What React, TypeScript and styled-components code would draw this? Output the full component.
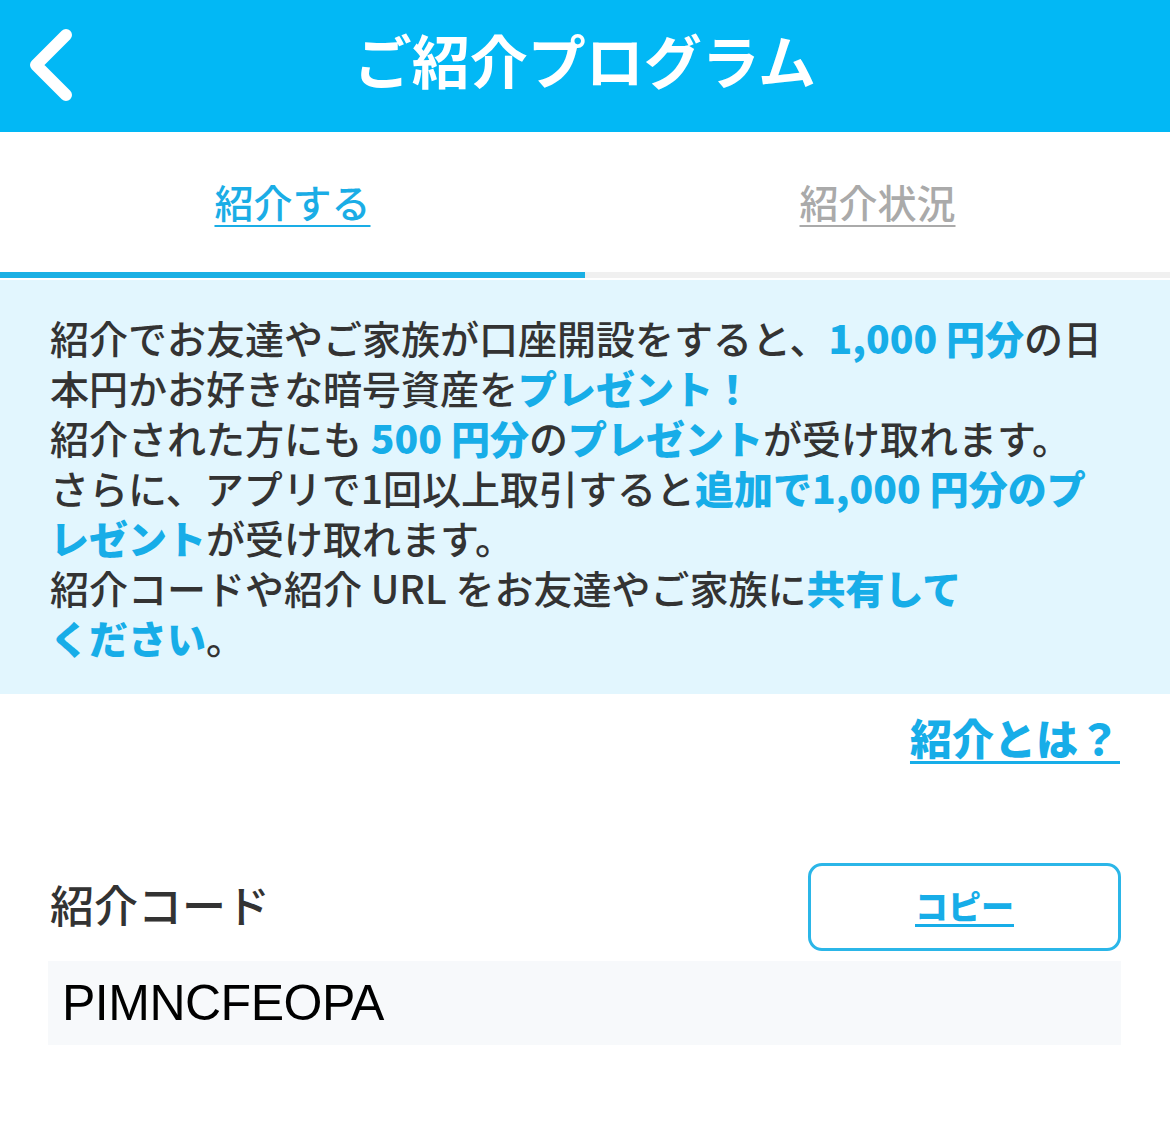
import React from 'react';
import styled, {createGlobalStyle} from "styled-components";

const GlobalStyle = createGlobalStyle`
  html, body {
    margin: 0;
    padding: 0;
    background: #ffffff;
  }
  body {
    font-family: "Noto Sans CJK JP", "Noto Sans", sans-serif;
    color: #333333;
  }
`;

const Page = styled.div`
  width: 1170px;
  min-height: 1131px;
  background: #ffffff;
`;

const Header = styled.header`
  height: 132px;
  background-color: #02b8f5;
  display: grid;
  grid-template-columns: 1fr auto 1fr;
  align-items: center;
`;

const BackButton = styled.button`
  justify-self: start;
  width: 100px;
  height: 100px;
  margin-left: 20px;
  margin-top: 8px;
  padding: 0;
  border: none;
  background: transparent;
  display: flex;
  align-items: center;
  cursor: pointer;
`;

const Title = styled.h1`
  margin: 0 0 14px;
  color: #ffffff;
  font-size: 58px;
  font-weight: 700;
  line-height: 1;
`;

const TabBar = styled.nav`
  display: grid;
  grid-template-columns: 1fr 1fr;
`;

const Tab = styled.div<{ $active?: boolean }>`
  height: 140px;
  display: flex;
  align-items: center;
  justify-content: center;
  border-bottom: 6px solid ${p => p.$active ? "#1bb0e4" : "#f0f0f0"};
  box-sizing: content-box;
`;

const TabLabel = styled.a<{ $active?: boolean }>`
  font-size: 39px;
  font-weight: 500;
  color: ${p => p.$active ? "#1aade6" : "#aaaaaa"};
  text-decoration: underline;
  text-decoration-thickness: 2px;
  text-underline-offset: 7px;
  margin-bottom: 2px;
`;

const InfoBox = styled.section`
  margin-top: 2px;
  background-color: #e2f6fe;
  padding: 32px 50px 32px;
`;

const InfoLine = styled.div`
  font-size: 39px;
  line-height: 50px;
  height: 50px;
  white-space: nowrap;
  color: #333333;
  font-weight: 500;
`;

const Em = styled.span`
  display: inline-block;
  line-height: 50px;
  color: #17ade8;
  font-weight: 800;
`;

const LinkRow = styled.div`
  display: flex;
  justify-content: flex-end;
  padding: 17px 50px 0;
`;

const HelpLink = styled.a`
  font-size: 42px;
  line-height: 52px;
  font-weight: 800;
  color: #17ade8;
  text-decoration: underline;
  text-decoration-thickness: 3px;
  text-underline-offset: 6px;
`;

const CodeSection = styled.section`
  padding: 100px 49px 0 48px;
`;

const CodeHeader = styled.div`
  display: flex;
  align-items: center;
  justify-content: space-between;
`;

const CodeLabel = styled.h2`
  margin: 0 0 6px 2px;
  font-size: 44px;
  font-weight: 500;
  color: #333333;
`;

const CopyButton = styled.button`
  width: 313px;
  height: 88px;
  border: 3px solid #2bb6e8;
  border-radius: 14px;
  background: #ffffff;
  display: flex;
  align-items: center;
  justify-content: center;
  cursor: pointer;
  font-family: "Noto Sans CJK JP", sans-serif;
  font-size: 33px;
  font-weight: 800;
  color: #17ade8;
  text-decoration: underline;
  text-decoration-thickness: 3px;
  text-underline-offset: 5px;
  padding: 0 0 4px;
`;

const CodeBox = styled.div`
  margin-top: 10px;
  height: 84px;
  background-color: #f7f9fb;
  display: flex;
  align-items: center;
  padding-left: 14px;
  font-family: "Liberation Sans", Arial, sans-serif;
  font-size: 50px;
  letter-spacing: -0.5px;
  color: #000000;
`;

function App() {
    return (
        <Page>
            <GlobalStyle/>
            <Header>
                <BackButton aria-label="戻る">
                    <svg width="60" height="90" viewBox="0 0 60 90">
                        <path d="M46 10 L16 40 L46 70" fill="none" stroke="#ffffff" strokeWidth="12"
                              strokeLinecap="round" strokeLinejoin="round"/>
                    </svg>
                </BackButton>
                <Title>ご紹介プログラム</Title>
                <div/>
            </Header>
            <TabBar>
                <Tab $active><TabLabel $active>紹介する</TabLabel></Tab>
                <Tab><TabLabel>紹介状況</TabLabel></Tab>
            </TabBar>
            <InfoBox>
                <InfoLine>紹介でお友達やご家族が口座開設をすると、<Em>1,000 円分</Em>の日</InfoLine>
                <InfoLine>本円かお好きな暗号資産を<Em>プレゼント！</Em></InfoLine>
                <InfoLine>紹介された方にも <Em>500 円分</Em>の<Em>プレゼント</Em>が受け取れます。</InfoLine>
                <InfoLine>さらに、アプリで1回以上取引すると<Em>追加で1,000 円分のプ</Em></InfoLine>
                <InfoLine><Em>レゼント</Em>が受け取れます。</InfoLine>
                <InfoLine>紹介コードや紹介 URL をお友達やご家族に<Em>共有して</Em></InfoLine>
                <InfoLine><Em>ください</Em>。</InfoLine>
            </InfoBox>
            <LinkRow>
                <HelpLink>紹介とは？</HelpLink>
            </LinkRow>
            <CodeSection>
                <CodeHeader>
                    <CodeLabel>紹介コード</CodeLabel>
                    <CopyButton>コピー</CopyButton>
                </CodeHeader>
                <CodeBox>PIMNCFEOPA</CodeBox>
            </CodeSection>
        </Page>
    );
}

export default App;
